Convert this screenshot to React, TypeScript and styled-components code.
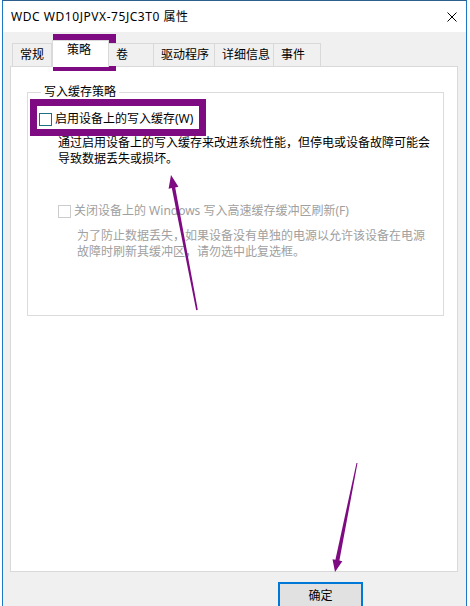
import React from "react";
import styled, { createGlobalStyle } from "styled-components";

const Global = createGlobalStyle`
  html, body { margin: 0; padding: 0; overflow: hidden; background: #ffffff; }
  body { font-family: "Noto Sans", "Noto Sans CJK SC", sans-serif; }
`;

const Stage = styled.div`
  position: relative;
  width: 470px;
  height: 606px;
  overflow: hidden;
  background: #ffffff;
`;

const Window = styled.div`
  margin-left: 2px;
  width: 465px;
  height: 606px;
  box-sizing: border-box;
  border: 1px solid #1f78c4;
  border-top-color: #2d5f8c;
  border-bottom: none;
  display: flex;
  flex-direction: column;
  background: #f0f0f0;
  overflow: hidden;
`;

const TitleBar = styled.div`
  height: 31px;
  flex: none;
  background: #ffffff;
  display: flex;
  align-items: center;
  justify-content: space-between;
  padding: 0 8px 0 8px;
  font-size: 12px;
  line-height: 16px;
  color: #000;
`;

const TitleText = styled.span`
  letter-spacing: 0.55px;
`;

const Close = styled.svg`
  width: 10px;
  height: 10px;
  margin-right: 1px;
  margin-top: 1px;
`;

const Body = styled.div`
  flex: 1;
  display: flex;
  flex-direction: column;
  padding: 8px 8px 0 7px;
`;

const TabRow = styled.div`
  display: flex;
  align-items: flex-end;
  height: 26px;
  margin-left: 2px;
  position: relative;
  z-index: 1;
`;

const Tab = styled.div<{ $w: number; $active?: boolean }>`
  width: ${(p) => p.$w}px;
  box-sizing: border-box;
  height: ${(p) => (p.$active ? 27 : 23)}px;
  margin-bottom: ${(p) => (p.$active ? -1 : 0)}px;
  background: ${(p) => (p.$active ? "#ffffff" : "#f0f0f0")};
  border: 1px solid #d9d9d9;
  border-bottom: none;
  border-left-width: ${(p) => (p.$active ? 1 : 0)}px;
  border-left-style: solid;
  font-size: 12px;
  line-height: 16px;
  color: #000;
  padding: ${(p) => (p.$active ? "1px 0 0 14px" : "3px 0 0 7px")};
  white-space: nowrap;
  &:first-child {
    border-left-width: 1px;
  }
`;

const Panel = styled.div`
  height: 506px;
  box-sizing: border-box;
  background: #ffffff;
  border: 1px solid #d9d9d9;
  padding: 17px 13px 0 16px;
  display: flex;
  flex-direction: column;
`;

const Group = styled.fieldset`
  margin: 0;
  padding: 0 0 55px 11px;
  border: 1px solid #dcdcdc;
  min-width: 0;
  display: flex;
  flex-direction: column;
  align-items: flex-start;
`;

const Legend = styled.legend`
  margin-left: 2px;
  padding: 0 3px;
  font-size: 12px;
  line-height: 16px;
  color: #000;
`;

const CheckRow = styled.div<{ $indent?: number; $top: number; $disabled?: boolean }>`
  display: flex;
  align-items: center;
  gap: 3px;
  margin-top: ${(p) => p.$top}px;
  margin-left: ${(p) => p.$indent ?? 0}px;
  font-size: 12px;
  line-height: 16px;
  color: ${(p) => (p.$disabled ? "#a0a0a0" : "#000")};
  white-space: nowrap;
`;

const Box = styled.span<{ $disabled?: boolean }>`
  width: 13px;
  height: 13px;
  box-sizing: border-box;
  border: 1px solid ${(p) => (p.$disabled ? "#cccccc" : "#1e6f84")};
  background: #fff;
  flex: none;
`;

const Desc = styled.div<{ $indent: number; $top: number; $w: number; $disabled?: boolean }>`
  margin-top: ${(p) => p.$top}px;
  margin-left: ${(p) => p.$indent}px;
  width: ${(p) => p.$w}px;
  font-size: 12px;
  line-height: 16px;
  color: ${(p) => (p.$disabled ? "#a0a0a0" : "#000")};
`;

const Footer = styled.div`
  display: flex;
  padding: 10px 0 0 268px;
`;

const Button = styled.div`
  width: 85px;
  height: 26px;
  box-sizing: border-box;
  border: 2px solid #0078d7;
  background: #e1e1e1;
  font-size: 12px;
  line-height: 16px;
  text-align: center;
  padding-top: 4px;
  color: #000;
`;

const Highlight = styled.div<{ $x: number; $y: number; $w: number; $h: number }>`
  position: absolute;
  left: ${(p) => p.$x}px;
  top: ${(p) => p.$y}px;
  width: ${(p) => p.$w}px;
  height: ${(p) => p.$h}px;
  box-sizing: border-box;
  border: 7px solid #7e0b82;
  pointer-events: none;
`;

const Arrows = styled.svg`
  position: absolute;
  left: 0;
  top: 0;
  width: 470px;
  height: 606px;
  pointer-events: none;
`;

const tabs = [
  { label: "常规", w: 40 },
  { label: "策略", w: 57, active: true },
  { label: "卷", w: 45 },
  { label: "驱动程序", w: 61 },
  { label: "详细信息", w: 59 },
  { label: "事件", w: 47 },
];

export default function App() {
  return (
    <Stage>
      <Global />
      <Window>
        <TitleBar>
          <TitleText>WDC WD10JPVX-75JC3T0 属性</TitleText>
          <Close viewBox="0 0 10 10">
            <path d="M0.5 0.5 L9.5 9.5 M9.5 0.5 L0.5 9.5" stroke="#000" strokeWidth="1" fill="none" />
          </Close>
        </TitleBar>
        <Body>
          <TabRow>
            {tabs.map((t) => (
              <Tab key={t.label} $w={t.w} $active={t.active}>
                {t.label}
              </Tab>
            ))}
          </TabRow>
          <Panel>
            <Group>
              <Legend>写入缓存策略</Legend>
              <CheckRow $top={11}>
                <Box />
                <span>启用设备上的写入缓存(W)</span>
              </CheckRow>
              <Desc $indent={19} $top={8} $w={378}>
                通过启用设备上的写入缓存来改进系统性能，但停电或设备故障可能会导致数据丢失或损坏。
              </Desc>
              <CheckRow $top={36} $indent={19} $disabled>
                <Box $disabled />
                <span>关闭设备上的 Windows 写入高速缓存缓冲区刷新(F)</span>
              </CheckRow>
              <Desc $indent={38} $top={9} $w={354} $disabled>
                为了防止数据丢失，如果设备没有单独的电源以允许该设备在电源故障时刷新其缓冲区，请勿选中此复选框。
              </Desc>
            </Group>
          </Panel>
          <Footer>
            <Button>确定</Button>
          </Footer>
        </Body>
      </Window>
      <Highlight $x={53} $y={34} $w={63} $h={37} />
      <Highlight $x={30} $y={99} $w={176} $h={37} />
      <Arrows viewBox="0 0 470 606">
        <polygon
          fill="#7e0b82"
          points="196.2,310.2 171.8,188.1 168.6,188.7 171,175 178.4,186.8 175.2,187.5 197.8,309.8"
        />
        <polygon
          fill="#7e0b82"
          points="356.5,462.9 335.4,559.8 332.5,559.2 335,572 342.3,561.2 339.4,560.6 357.5,463.1"
        />
      </Arrows>
    </Stage>
  );
}
